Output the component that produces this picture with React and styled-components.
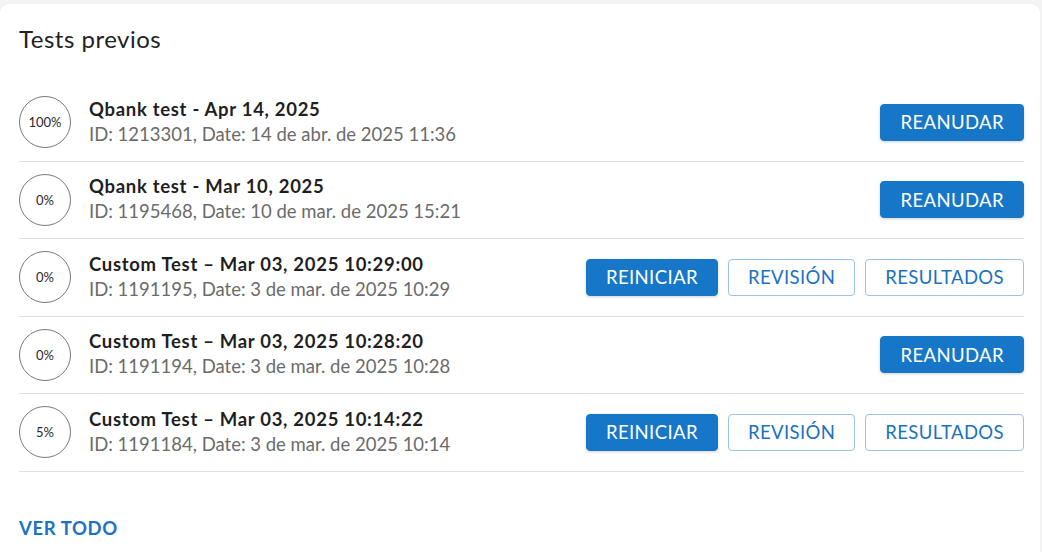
import React from 'react'
import styled, { createGlobalStyle } from 'styled-components'

const GlobalStyle = createGlobalStyle`
  html, body {
    margin: 0;
    padding: 0;
    background: #f3f3f3;
  }
  body {
    font-family: Lato, "Open Sans", Arial, sans-serif;
    color: #1f1f1f;
  }
`

const Page = styled.div`
  padding-top: 4px;
  width: 1042px;
  height: 552px;
  box-sizing: border-box;
  overflow: hidden;
`

const Card = styled.section`
  width: 1040px;
  min-height: 560px;
  background: #fff;
  border-radius: 9px;
  padding: 20px 16px 0 19px;
  box-sizing: border-box;
  box-shadow: 0 0 2px rgba(0, 0, 0, 0.04);
`

const Heading = styled.h2`
  margin: 0;
  font-size: 24px;
  font-weight: 400;
  line-height: 30px;
  letter-spacing: 0.5px;
  color: #222;
`

const List = styled.div`
  margin-top: 30px;
`

const Row = styled.div`
  display: flex;
  align-items: center;
  height: 77.5px;
  border-bottom: 1px solid #e0e0e0;
  box-sizing: border-box;
`

const Progress = styled.div`
  flex: none;
  width: 52px;
  height: 52px;
  border: 1px solid #7a7a7a;
  border-radius: 50%;
  box-sizing: border-box;
  display: flex;
  align-items: center;
  justify-content: center;
  font-size: 13px;
  color: #2a2a2a;
`

const Info = styled.div`
  flex: 1;
  margin-left: 18px;
  min-width: 0;
`

const Title = styled.div`
  font-size: 18.5px;
  font-weight: 700;
  line-height: 24px;
  letter-spacing: 0.7px;
  color: #1f1f1f;
`

const Meta = styled.div`
  font-size: 18.5px;
  line-height: 27px;
  color: #6b6b6b;
`

const Actions = styled.div`
  display: flex;
  gap: 10px;
  margin-left: 16px;
`

const Button = styled.button`
  font-family: inherit;
  font-size: 18.5px;
  letter-spacing: 0.4px;
  height: 37px;
  padding: 0 19px;
  border-radius: 4px;
  cursor: pointer;
  text-transform: uppercase;
  border: 1px solid ${p => (p.$outline ? '#9cc3e6' : '#1677c8')};
  background: ${p => (p.$outline ? '#fff' : '#1677c8')};
  color: ${p => (p.$outline ? '#1a72c0' : '#fff')};
  box-shadow: ${p => (p.$outline ? 'none' : '0 1px 3px rgba(0, 0, 0, 0.18)')};
`

const SeeAll = styled.a`
  display: inline-block;
  margin-top: 45px;
  font-size: 18.5px;
  font-weight: 700;
  letter-spacing: 0.6px;
  color: #1a73c4;
  text-decoration: none;
  text-transform: uppercase;
`

const tests = [
  {
    pct: '100%',
    title: 'Qbank test - Apr 14, 2025',
    meta: 'ID: 1213301, Date: 14 de abr. de 2025 11:36',
    done: false
  },
  {
    pct: '0%',
    title: 'Qbank test - Mar 10, 2025',
    meta: 'ID: 1195468, Date: 10 de mar. de 2025 15:21',
    done: false
  },
  {
    pct: '0%',
    title: 'Custom Test – Mar 03, 2025 10:29:00',
    meta: 'ID: 1191195, Date: 3 de mar. de 2025 10:29',
    done: true
  },
  {
    pct: '0%',
    title: 'Custom Test – Mar 03, 2025 10:28:20',
    meta: 'ID: 1191194, Date: 3 de mar. de 2025 10:28',
    done: false
  },
  {
    pct: '5%',
    title: 'Custom Test – Mar 03, 2025 10:14:22',
    meta: 'ID: 1191184, Date: 3 de mar. de 2025 10:14',
    done: true
  }
]

export default function App () {
  return (
    <Page>
      <GlobalStyle />
      <Card>
        <Heading>Tests previos</Heading>
        <List>
          {tests.map(t => (
            <Row key={t.meta}>
              <Progress>{t.pct}</Progress>
              <Info>
                <Title>{t.title}</Title>
                <Meta>{t.meta}</Meta>
              </Info>
              <Actions>
                {t.done ? (
                  <>
                    <Button>Reiniciar</Button>
                    <Button $outline>Revisión</Button>
                    <Button $outline>Resultados</Button>
                  </>
                ) : (
                  <Button>Reanudar</Button>
                )}
              </Actions>
            </Row>
          ))}
        </List>
        <SeeAll href='#'>Ver todo</SeeAll>
      </Card>
    </Page>
  )
}
